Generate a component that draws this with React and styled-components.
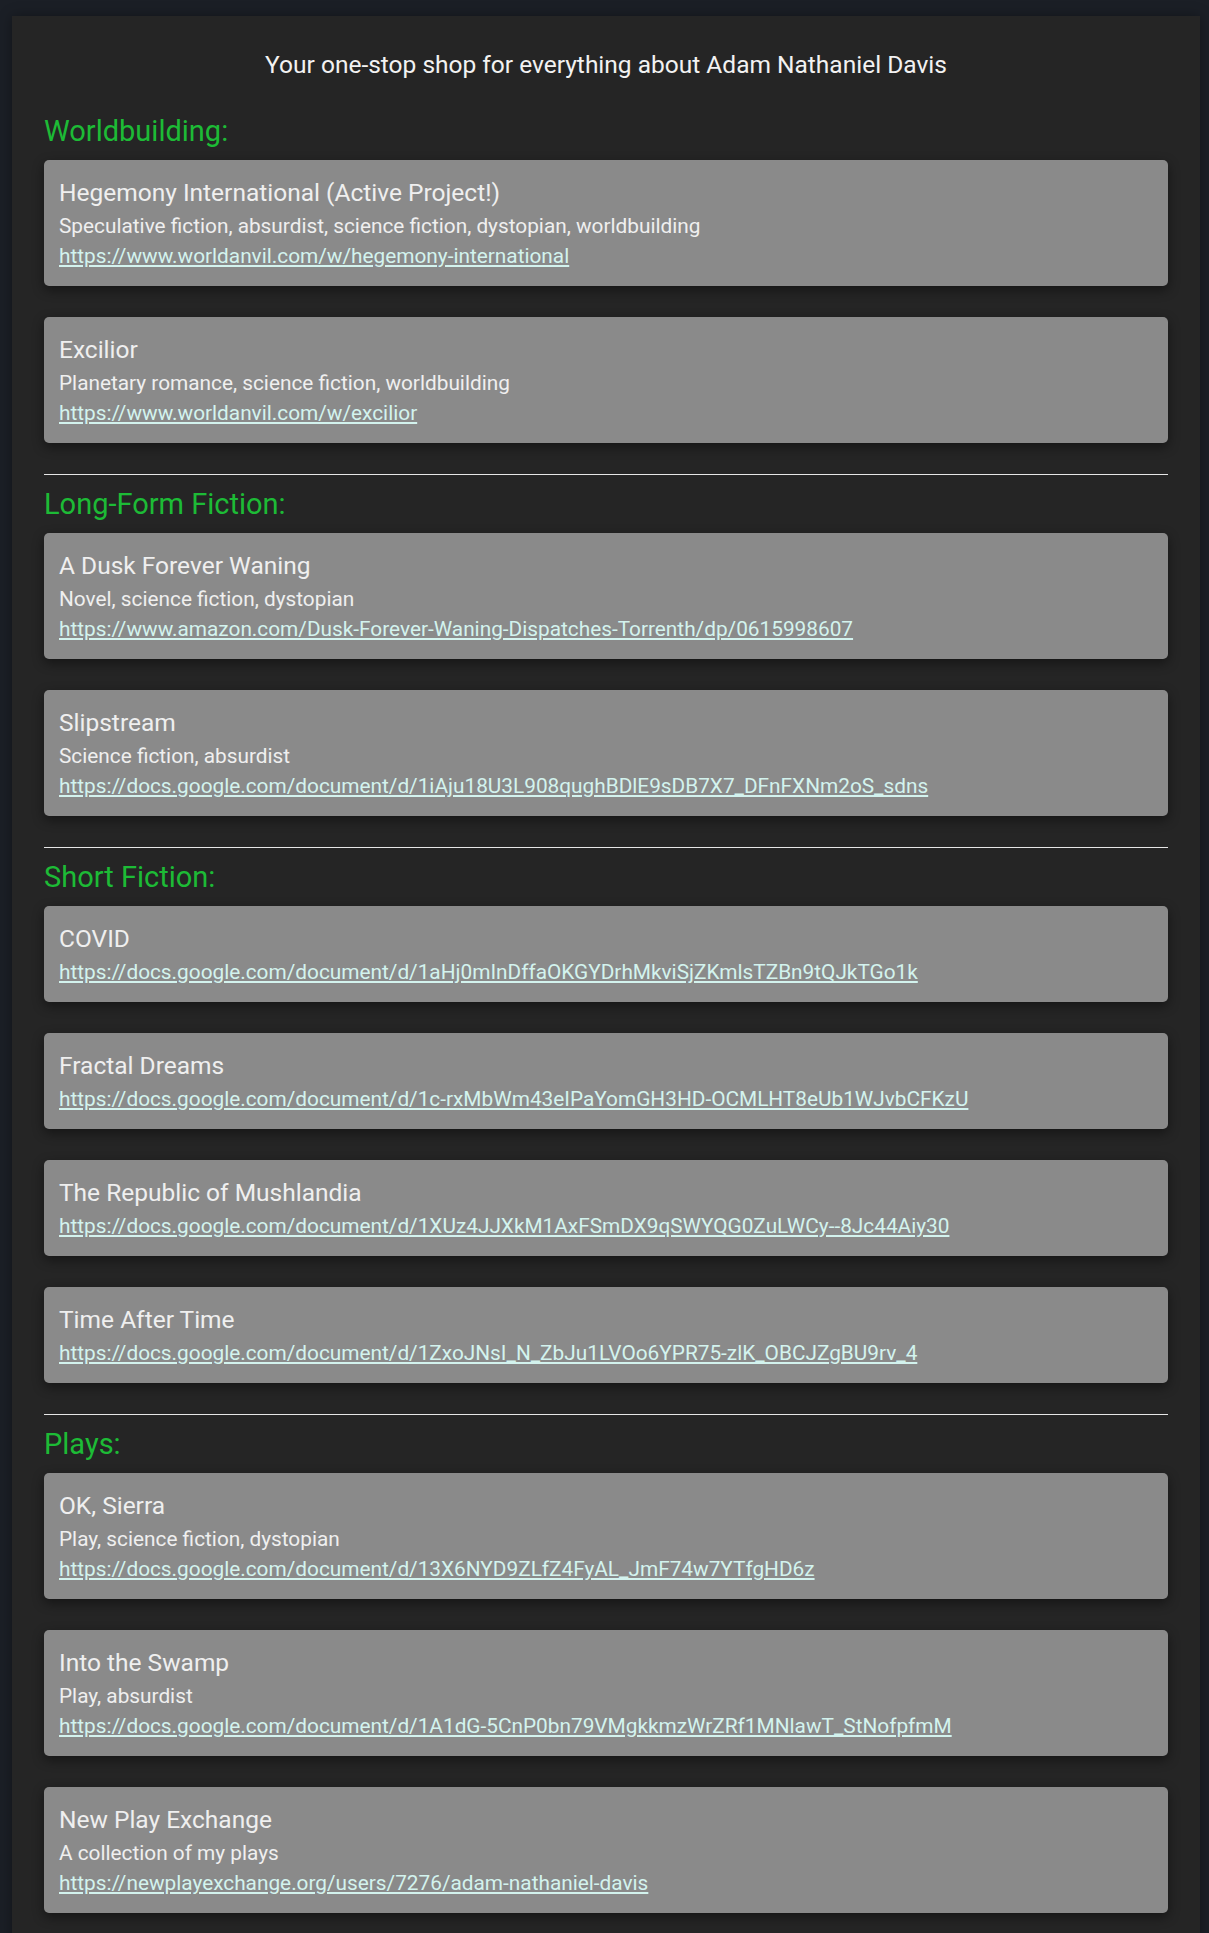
import styled, { createGlobalStyle } from "styled-components";

const GlobalStyle = createGlobalStyle`
  body {
    margin: 0;
    background-color: #1b1f26;
    font-family: Roboto, "Liberation Sans", sans-serif;
  }
`;

const Container = styled.div`
  margin: 16px 9px 0 12px;
  padding: 31px 32px 17px;
  background-color: #252525;
  box-shadow: 0 0 12px rgba(0, 0, 0, 0.35);
`;
const Intro = styled.p`
  margin: 0 0 31px;
  text-align: center;
  color: #f2f2f2;
  font-size: 24.5px;
  line-height: 36px;
`;
const Divider = styled.hr`
  margin: 0;
  border: none;
  border-top: 1px solid #e6e6e6;
`;
const Heading = styled.h2`
  margin: ${(props) => (props.first ? "0" : "12px")} 0 12px;
  color: #1dbb36;
  font-size: 29px;
  font-weight: 400;
  line-height: 34px;
`;
const Card = styled.div`
  margin-bottom: 31px;
  padding: 15px 15px;
  background-color: #8a8a8a;
  border-radius: 5px;
  box-shadow: 0 4px 12px rgba(0, 0, 0, 0.45);
  color: #efefef;
`;
const Title = styled.div`
  font-size: 24.5px;
  line-height: 36px;
`;
const Desc = styled.div`
  font-size: 20.8px;
  line-height: 30px;
`;
const Link = styled.a`
  display: inline-block;
  color: #d3f3ee;
  font-size: 20.8px;
  line-height: 30px;
  text-decoration: underline;
`;

const sections = [
  {
    name: "Worldbuilding:",
    items: [
      {
        title: "Hegemony International (Active Project!)",
        desc: "Speculative fiction, absurdist, science fiction, dystopian, worldbuilding",
        url: "https://www.worldanvil.com/w/hegemony-international",
      },
      {
        title: "Excilior",
        desc: "Planetary romance, science fiction, worldbuilding",
        url: "https://www.worldanvil.com/w/excilior",
      },
    ],
  },
  {
    name: "Long-Form Fiction:",
    items: [
      {
        title: "A Dusk Forever Waning",
        desc: "Novel, science fiction, dystopian",
        url: "https://www.amazon.com/Dusk-Forever-Waning-Dispatches-Torrenth/dp/0615998607",
      },
      {
        title: "Slipstream",
        desc: "Science fiction, absurdist",
        url: "https://docs.google.com/document/d/1iAju18U3L908qughBDlE9sDB7X7_DFnFXNm2oS_sdns",
      },
    ],
  },
  {
    name: "Short Fiction:",
    items: [
      {
        title: "COVID",
        url: "https://docs.google.com/document/d/1aHj0mInDffaOKGYDrhMkviSjZKmlsTZBn9tQJkTGo1k",
      },
      {
        title: "Fractal Dreams",
        url: "https://docs.google.com/document/d/1c-rxMbWm43eIPaYomGH3HD-OCMLHT8eUb1WJvbCFKzU",
      },
      {
        title: "The Republic of Mushlandia",
        url: "https://docs.google.com/document/d/1XUz4JJXkM1AxFSmDX9qSWYQG0ZuLWCy--8Jc44Aiy30",
      },
      {
        title: "Time After Time",
        url: "https://docs.google.com/document/d/1ZxoJNsI_N_ZbJu1LVOo6YPR75-zlK_OBCJZgBU9rv_4",
      },
    ],
  },
  {
    name: "Plays:",
    items: [
      {
        title: "OK, Sierra",
        desc: "Play, science fiction, dystopian",
        url: "https://docs.google.com/document/d/13X6NYD9ZLfZ4FyAL_JmF74w7YTfgHD6z",
      },
      {
        title: "Into the Swamp",
        desc: "Play, absurdist",
        url: "https://docs.google.com/document/d/1A1dG-5CnP0bn79VMgkkmzWrZRf1MNlawT_StNofpfmM",
      },
      {
        title: "New Play Exchange",
        desc: "A collection of my plays",
        url: "https://newplayexchange.org/users/7276/adam-nathaniel-davis",
      },
    ],
  },
];

const App = () => {
  return (
    <Container>
      <GlobalStyle />
      <Intro>Your one-stop shop for everything about Adam Nathaniel Davis</Intro>
      {sections.map((section, i) => (
        <div key={section.name}>
          {i > 0 && <Divider />}
          <Heading first={i === 0}>{section.name}</Heading>
          {section.items.map((item) => (
            <Card key={item.title}>
              <Title>{item.title}</Title>
              {item.desc && <Desc>{item.desc}</Desc>}
              <Link href={item.url}>{item.url}</Link>
            </Card>
          ))}
        </div>
      ))}
    </Container>
  );
};

export default App;
